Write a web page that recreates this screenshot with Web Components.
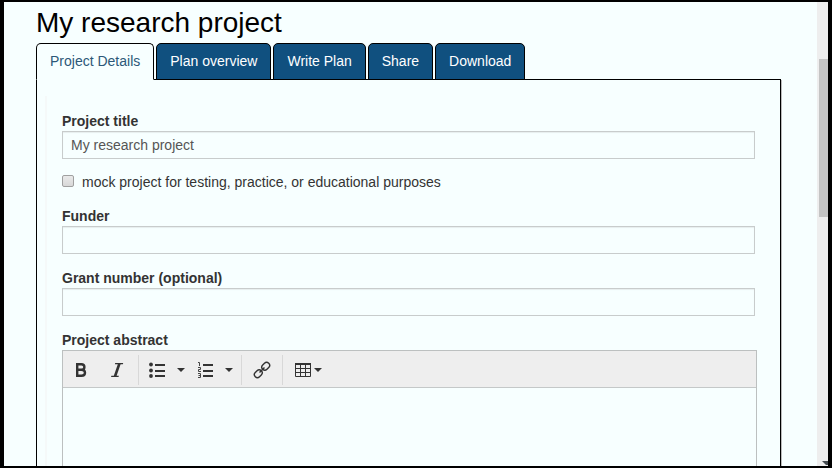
<!DOCTYPE html>
<html lang="en">
<head>
<meta charset="utf-8">
<title>My research project</title>
<style>
html, body { margin: 0; height: 100%; }
body { background: #000; font: 14px/20px "Liberation Sans", Arial, sans-serif; color: #333; }
</style>
</head>
<body>
<app-window>
  <project-page heading="My research project">
    <tab-bar slot="tabs">
      <tab-link current>Project Details</tab-link>
      <tab-link>Plan overview</tab-link>
      <tab-link>Write Plan</tab-link>
      <tab-link>Share</tab-link>
      <tab-link>Download</tab-link>
    </tab-bar>
    <text-field label="Project title" value="My research project"></text-field>
    <check-field>mock project for testing, practice, or educational purposes</check-field>
    <text-field label="Funder"></text-field>
    <text-field label="Grant number (optional)"></text-field>
    <rich-editor label="Project abstract"></rich-editor>
  </project-page>
</app-window>

<script>
const define = (name, html, setup) => customElements.define(name, class extends HTMLElement {
  constructor() {
    super();
    this.attachShadow({ mode: 'open' }).innerHTML = html;
  }
  connectedCallback() { if (setup) setup(this, this.shadowRoot); }
});

define('app-window', `
<style>
:host { display: grid; grid-template-columns: minmax(0, 1fr) 11px; box-sizing: border-box; height: 100vh; border: solid #000; border-width: 2px 4px; background: #f7ffff; overflow: hidden; }
main { overflow: hidden; min-height: 0; display: flex; flex-direction: column; }
.bar { display: flex; flex-direction: column; background: #eee; overflow: hidden; }
.thumb { margin: 57px 0 0 2px; height: 34%; background: #c4c4c4; }
svg { margin: auto 0 1px 5px; display: block; flex: none; }
</style>
<main><slot></slot></main>
<div class="bar" aria-hidden="true"><div class="thumb"></div>
<svg width="6" height="4" viewBox="0 0 6 4"><path d="M0 0h6v4H4z" fill="#444b50"/></svg></div>`);

define('project-page', `
<style>
:host { flex: 1; display: flex; flex-direction: column; min-height: 0; padding: 5px 36px 0 32px; }
h1 { margin: 0; font-size: 28px; line-height: 32px; font-weight: 400; color: #000; }
.tabs { margin-top: 4px; position: relative; z-index: 1; }
.panel { flex: 1; margin-top: -1px; border: 1px solid #000; border-bottom: 0; box-shadow: 1px 1px 0 #bbb; padding: 16px 0 0 8px; display: flex; }
section { flex: 1; min-width: 0; border-left: 2px solid #f5f9f9; padding: 15px 23px 0 15px; display: flex; flex-direction: column; gap: 14px; }
</style>
<h1></h1>
<div class="tabs"><slot name="tabs"></slot></div>
<div class="panel"><section><slot></slot></section></div>`,
(el, root) => { root.querySelector('h1').textContent = el.getAttribute('heading'); });

define('tab-bar', `
<style>
:host { display: block; }
nav { display: flex; gap: 2px; }
</style>
<nav><slot></slot></nav>`);

define('tab-link', `
<style>
:host { display: block; }
a { display: block; padding: 7px 13px 8px; border: 1px solid #000; border-radius: 5px 5px 0 0; background: #10507f; color: #fff; text-decoration: none; }
:host([current]) a { background: #f7ffff; color: #2c5878; border-bottom-color: #f7ffff; }
</style>
<a href="#"><slot></slot></a>`,
(el, root) => { if (el.hasAttribute('current')) root.querySelector('a').setAttribute('aria-current', 'page'); });

define('text-field', `
<style>
:host { display: block; margin-right: 2px; }
label { display: block; font-weight: 700; }
input { display: block; box-sizing: border-box; width: 100%; height: 28px; padding: 0 8px; border: 1px solid #c8cccc; border-radius: 0; background: transparent; font: inherit; color: #555; box-shadow: inset 0 1px 1px #e6eeee; }
</style>
<label for="field"></label><input id="field" type="text">`,
(el, root) => {
  root.querySelector('label').textContent = el.getAttribute('label');
  root.querySelector('input').value = el.getAttribute('value') || '';
});

define('check-field', `
<style>
:host { display: flex; align-items: center; gap: 8px; line-height: 19px; }
input { appearance: none; margin: 0 0 4px; box-sizing: border-box; width: 12px; height: 12px; border: 1px solid #a0a0a0; border-radius: 2px; background: linear-gradient(#eaeaea, #d8d8d8); }
input:checked { background: #10507f; }
</style>
<input id="box" type="checkbox"><label for="box"><slot></slot></label>`);

const caret = '<svg width="8" height="4" viewBox="0 0 8 4"><path d="M0 0h8L4 4z"/></svg>';
define('rich-editor', `
<style>
:host { flex: 1; display: flex; flex-direction: column; }
label { font-weight: 700; }
.editor { flex: 1; display: flex; flex-direction: column; border: 1px solid #bcc0c0; border-bottom: 0; }
.toolbar { display: flex; height: 34px; padding-top: 2px; align-items: center; background: #eee; border-bottom: 1px solid #c4c8c8; }
.group { display: flex; padding-right: 3px; }
.group + .group { border-left: 1px solid #d8d8d8; }
.lists { padding-right: 6px; }
.link { padding: 0 2px; }
button { display: flex; align-items: center; justify-content: center; gap: 3px; box-sizing: border-box; width: 36px; height: 30px; padding: 0; border: 0; background: none; }
button.more { width: 12px; }
button.table { width: 50px; }
svg { display: block; fill: #333; }
textarea { flex: 1; border: 0; margin: 0; padding: 8px; resize: none; background: transparent; font: inherit; color: #333; outline: 0; overflow: hidden; }
</style>
<label for="text"></label>
<div class="editor">
  <div class="toolbar" role="toolbar">
    <div class="group">
      <button type="button" aria-label="Bold"><svg width="16" height="16" viewBox="0 0 16 16"><path fill="none" stroke="#333" stroke-width="2.400" d="M4.200 2.200H8.500c1.900 0 2.900.9 2.900 2.700S10.400 7.700 8.500 7.700H4.200M8.500 7.700c2.300 0 3.500 1.100 3.500 3.100s-1.200 3-3.500 3H4.200V1"/></svg></button>
      <button type="button" aria-label="Italic"><svg width="16" height="16" viewBox="0 0 16 16"><path d="M6.200 1h8l-.3 1.200h-2.300L7.600 13.800h2.300l-.4 1.200H2l.4-1.200h2.400L8.800 2.200H5.900z"/></svg></button>
    </div>
    <div class="group lists">
      <button type="button" aria-label="Bulleted list"><svg width="16" height="16" viewBox="0 0 16 16"><circle cx="2" cy="2.500" r="1.900"/><circle cx="2" cy="8.500" r="1.900"/><circle cx="2" cy="14" r="1.900"/><path d="M6 2h10v2H6zM6 8h10v2H6zM6 13h10v2H6z"/></svg></button>
      <button type="button" class="more" aria-label="Bullet styles">${caret}</button>
      <button type="button" aria-label="Numbered list"><svg width="16" height="16" viewBox="0 0 16 16"><path d="M6 2h10v2H6zM6 8h10v2H6zM6 13h10v2H6z"/><path fill="none" stroke="#444" d="M1 .5h1.500V4M1 5.500h2.500v2H1.500v2H4M1 11.500h2.500v4H1M1.500 13.500h2"/></svg></button>
      <button type="button" class="more" aria-label="Number styles">${caret}</button>
    </div>
    <div class="group link">
      <button type="button" aria-label="Insert link"><svg width="18" height="18" viewBox="0 0 18 18"><g fill="none" stroke="#333" stroke-width="1.400" transform="rotate(-45 9 9)"><rect x="-.5" y="6" width="8.500" height="6" rx="3"/><rect x="10" y="6" width="8.500" height="6" rx="3"/><path d="M5.500 9h7"/></g></svg></button>
    </div>
    <div class="group">
      <button type="button" class="table" aria-label="Table"><svg width="16" height="14" viewBox="0 0 16 14"><path d="M0 0h16v2H0z"/><path fill="none" stroke="#333" d="M.5.5h15v13H.5zM.5 5.500h15M.5 9.500h15M5.500 1v12M10.500 1v12"/></svg>${caret}</button>
    </div>
  </div>
  <textarea id="text"></textarea>
</div>`,
(el, root) => { root.querySelector('label').textContent = el.getAttribute('label'); });
</script>
</body>
</html>
